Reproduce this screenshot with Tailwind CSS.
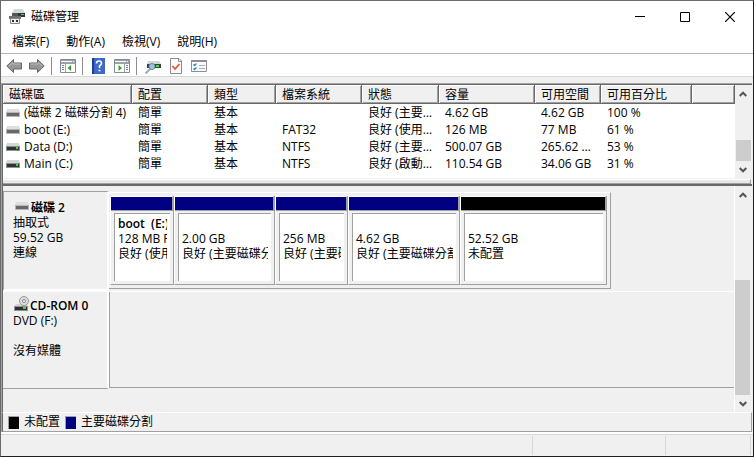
<!DOCTYPE html>
<html lang="zh-Hant">
<head>
<meta charset="utf-8">
<meta name="viewport" content="width=device-width, initial-scale=1">
<title>磁碟管理</title>
<script src="https://cdn.jsdelivr.net/npm/@tailwindcss/browser@4"></script>
</head>
<body class="h-screen overflow-hidden bg-[#f0f0f0] font-['Open_Sans','Noto_Sans_CJK_TC',sans-serif] text-xs text-black">
<svg class="hidden" aria-hidden="true">
  <symbol id="drive" viewBox="0 0 14 8"><path d="M1 0h12l1 3H0z" fill="#dcdee1"/><path d="M0 3h14v5H0z" fill="#b4b6b9"/><path d="M1 4h12v3H1z" fill="#66686a"/></symbol>
  <symbol id="drive-on" viewBox="0 0 14 8"><path d="M1 0h12l1 3H0z" fill="#d3d5d8"/><path d="M0 3h14v5H0z" fill="#8f9193"/><path d="M1 4h12v3H1z" fill="#303234"/><path d="M10 4h2v2h-2z" fill="#2fe02f"/></symbol>
  <symbol id="up" viewBox="0 0 8 6"><path d="M0.700 5 4 1.700 7.300 5" fill="none" stroke="#555" stroke-width="2"/></symbol>
  <symbol id="down" viewBox="0 0 8 6"><path d="M0.700 1 4 4.300 7.300 1" fill="none" stroke="#555" stroke-width="2"/></symbol>
</svg>
<div class="flex h-full flex-col border border-[#6b6b6b] border-r-[#202020] border-b-[#202020]">
  <header class="flex h-[31px] shrink-0 items-center bg-white pl-2">
    <svg class="h-4 w-4" viewBox="0 0 16 16" aria-hidden="true"><path d="M5 0h9l2 4H3z" fill="#d4d6d8"/><path d="M3 4h13v4H3z" fill="#55575a"/><path d="M9 4h7v4H9z" fill="#343638"/><path d="M12 5h3v1h-3z" fill="#35d83b"/><path d="M0 7h12v3H0z" fill="#6e7072"/><path d="M1.500 9.500h9v5h-9z" fill="#ececec" stroke="#888"/><path d="M3 11h2v2H3zM7 11h2v2H7z" fill="#333"/></svg>
    <h1 class="grow pl-[6px]">磁碟管理</h1>
    <button aria-label="最小化" class="flex h-full w-[45px] items-center justify-center"><svg class="h-[10px] w-[10px]"><path d="M0 4.500h10" stroke="#000"/></svg></button>
    <button aria-label="最大化" class="flex h-full w-[45px] items-center justify-center"><svg class="h-[10px] w-[10px]"><path d="M.5.5h9v9h-9z" fill="none" stroke="#000"/></svg></button>
    <button aria-label="關閉" class="flex h-full w-[46px] items-center justify-center"><svg class="h-[10px] w-[10px]"><path d="m0 0 10 10M10 0 0 10" stroke="#000" stroke-width="1.200"/></svg></button>
  </header>
  <nav class="flex h-[22px] shrink-0 items-center gap-[17px] border-b border-[#b0b4bf] bg-white pb-px pl-[11px]">
    <button>檔案(F)</button><button>動作(A)</button><button>檢視(V)</button><button>說明(H)</button>
  </nav>
  <div class="flex h-[23px] shrink-0 items-center border-b border-[#d7d7d7] bg-white pt-[2px] pl-1">
    <button aria-label="上一頁" class="px-[1px]"><svg class="h-4 w-4" viewBox="0 0 16 16"><path d="M.8 8 7.500 1.500V5H15.500v6H7.500v3.500z" fill="#969696" stroke="#666"/><path d="M3 8 7 4.500V6h7.500" fill="none" stroke="#b9b9b9"/></svg></button>
    <button aria-label="下一頁" class="ml-[5px] px-[1px]"><svg class="h-4 w-4" viewBox="0 0 16 16"><path d="M15.200 8 8.500 1.500V5H.5v6h8v3.500z" fill="#969696" stroke="#666"/><path d="M13 8 9 4.500V6H1.500" fill="none" stroke="#b9b9b9"/></svg></button>
    <span class="mr-[6px] ml-[5px] h-[18px] w-px bg-[#8d8d8d]"></span>
    <button aria-label="顯示主控台樹狀目錄" class="px-[2px]"><svg class="h-[14px] w-4" viewBox="0 0 16 14"><path d="M.5.5h15v13H.5z" fill="#fff" stroke="#838b98"/><path d="M1 1h14v3H1z" fill="#9aa2ae"/><path d="M1 2.500h11M13 2.500h1" stroke="#fff"/><path d="M5.500 5v8M1 4.500h14" stroke="#9ba1aa"/><path d="M2 6.500h2M2 8.500h2M2 10.500h2" stroke="#687b99"/><path d="M11 6v6L7.500 9z" fill="#32a12e"/></svg></button>
    <span class="mr-[6px] ml-1 h-[18px] w-px bg-[#8d8d8d]"></span>
    <button aria-label="說明" class="px-[3px]"><svg class="h-4 w-[13px]" viewBox="0 0 13 16"><path d="M0 0h13v16H0z" fill="#3f68cc"/><path d="M0 0h2v16H0z" fill="#233e91"/><path d="M4.500 5.500Q4.500 3 7 3t2.500 2.200Q9.500 6.500 7.500 8V10M6.500 12.500h2" fill="none" stroke="#fff" stroke-width="1.600"/></svg></button>
    <button aria-label="顯示動作窗格" class="ml-[3px] px-[3px]"><svg class="h-[14px] w-4" viewBox="0 0 16 14"><path d="M.5.5h15v13H.5z" fill="#fff" stroke="#838b98"/><path d="M1 1h14v3H1z" fill="#9aa2ae"/><path d="M1 2.500h11M13 2.500h1" stroke="#fff"/><path d="M10.500 5v8M1 4.500h14" stroke="#9ba1aa"/><path d="M12 6.500h2M12 8.500h2M12 10.500h2" stroke="#687b99"/><path d="M4.500 6v6L8 9z" fill="#32a12e"/></svg></button>
    <span class="mx-[3px] h-[18px] w-px bg-[#8d8d8d]"></span>
    <button aria-label="重新掃描磁碟" class="ml-[5px]"><svg class="h-4 w-4" viewBox="0 0 16 16"><path d="M3 3h11l2 3H2z" fill="#d5d7d9"/><path d="M2 6h14v4H2z" fill="#3b3d3f"/><path d="M11 7h3v2h-3z" fill="#3bdc42"/><path d="m.5 15.500 5-5" stroke="#9aafc0" stroke-width="2"/><circle cx="7" cy="8.500" r="3" fill="#a5c3d6" stroke="#6587a0"/></svg></button>
    <button aria-label="內容" class="ml-[9px]"><svg class="h-4 w-3" viewBox="0 0 12 16"><path d="M.5.5H9L11.500 3v12.500H.5z" fill="#fafafa" stroke="#8c8c8c"/><path d="M8.500 .5V3.500h3" fill="none" stroke="#8c8c8c"/><path d="m2.500 8 2.500 3L9.500 6" fill="none" stroke="#e4562d" stroke-width="1.800"/></svg></button>
    <button aria-label="選項" class="ml-[9px]"><svg class="h-3 w-4" viewBox="0 0 16 12"><path d="M.5.5h15v11H.5z" fill="#fcfdff" stroke="#8b9099"/><path d="M0 1h16" stroke="#8b9099" stroke-width="2"/><path d="m2.500 4.500 1 1 2-2M2.500 8.500l1 1 2-2" fill="none" stroke="#308ad0" stroke-width="1.400"/><path d="M8 5.500h6M8 8.500h6" stroke="#aaa"/></svg></button>
  </div>
  <main class="mt-[6px] mr-px flex min-h-0 grow flex-col border-t border-l border-[#a0a0a0]">
    <section class="flex h-[94px] shrink-0 border-t border-l border-[#696969] bg-white" aria-label="磁碟區清單">
      <div class="min-w-0 grow overflow-hidden">
      <table class="w-full table-fixed border-separate border-spacing-0 text-left">
        <colgroup><col class="w-[129px]"><col class="w-[76px]"><col class="w-[68px]"><col class="w-[86px]"><col class="w-[77px]"><col class="w-[96px]"><col class="w-[66px]"><col class="w-[91px]"><col></colgroup>
        <thead><tr class="h-[19px] leading-4 [&>th]:border-r [&>th]:border-b [&>th]:border-[#696969] [&>th]:bg-[#f0f0f0] [&>th]:p-0 [&>th]:pt-[2px] [&>th]:pl-[6px] [&>th]:font-normal [&>th]:whitespace-nowrap [&>th]:shadow-[inset_1px_1px_white,inset_-1px_-1px_#a0a0a0]">
          <th>磁碟區</th><th>配置</th><th>類型</th><th>檔案系統</th><th>狀態</th><th>容量</th><th>可用空間</th><th>可用百分比</th><th aria-label="其他"></th></tr></thead>
        <tbody class="[&_td]:h-[17px] [&_td]:overflow-hidden [&_td]:p-0 [&_td]:pt-px [&_td]:pr-[5px] [&_td]:pl-[6px] [&_td]:leading-4 [&_td]:text-ellipsis [&_td]:whitespace-nowrap">
          <tr><td><div class="-ml-[3px] flex items-center gap-1"><svg class="h-2 w-[14px] shrink-0"><use href="#drive"/></svg>(磁碟 2 磁碟分割 4)</div></td><td>簡單</td><td>基本</td><td></td><td>良好 (主要磁碟分割)</td><td>4.62 GB</td><td>4.62 GB</td><td>100 %</td><td></td></tr>
          <tr><td><div class="-ml-[3px] flex items-center gap-1"><svg class="h-2 w-[14px] shrink-0"><use href="#drive"/></svg>boot (E:)</div></td><td>簡單</td><td>基本</td><td>FAT32</td><td>良好 (使用中)</td><td>126 MB</td><td>77 MB</td><td>61 %</td><td></td></tr>
          <tr><td><div class="-ml-[3px] flex items-center gap-1"><svg class="h-2 w-[14px] shrink-0"><use href="#drive-on"/></svg>Data (D:)</div></td><td>簡單</td><td>基本</td><td>NTFS</td><td>良好 (主要磁碟分割)</td><td>500.07 GB</td><td>265.62 GB</td><td>53 %</td><td></td></tr>
          <tr><td><div class="-ml-[3px] flex items-center gap-1"><svg class="h-2 w-[14px] shrink-0"><use href="#drive-on"/></svg>Main (C:)</div></td><td>簡單</td><td>基本</td><td>NTFS</td><td>良好 (啟動磁碟)</td><td>110.54 GB</td><td>34.06 GB</td><td>31 %</td><td></td></tr>
        </tbody>
      </table>
      </div>
      <div class="flex w-[17px] shrink-0 flex-col items-center bg-[#f0f0f0] pr-px">
        <svg class="mt-[6px] h-[6px] w-2"><use href="#up"/></svg><div class="mt-[43px] h-[21px] w-[15px] bg-[#cdcdcd]"></div><svg class="mt-[6px] h-[6px] w-2"><use href="#down"/></svg>
      </div>
    </section>
    <div class="h-2 shrink-0 border-b-2 border-l border-[#696969] bg-[#f0f0f0] pt-px pr-px"><div class="h-[5px] border-t border-r border-b border-t-white border-r-[#a0a0a0] border-b-[#a0a0a0] bg-[#e8e8e8]"></div></div>
    <section class="flex min-h-0 grow border-l border-[#696969]" aria-label="磁碟配置圖">
      <div class="min-w-0 grow overflow-hidden pt-[5px]">
        <div class="flex h-[101px] border-b border-white">
          <div class="h-[100px] w-[106px] shrink-0 border-t border-r-2 border-b-2 border-l border-t-[#a0a0a0] border-r-white border-b-white border-l-[#a0a0a0] pt-2 pl-[9px] leading-[15px]">
            <h2 class="flex items-center gap-[2px] pl-[2px] font-semibold"><svg class="-mt-1 h-2 w-[14px]"><use href="#drive"/></svg>磁碟 2</h2><p>抽取式</p><p>59.52 GB</p><p>連線</p>
          </div>
          <div class="grow">
            <div class="mt-px flex h-[97px] w-[502px] border-t border-r border-b border-t-white border-r-[#a0a0a0] border-b-[#a0a0a0] pt-[3px] pl-px leading-[15px] whitespace-nowrap">
              <article class="flex h-[89px] w-[64px] flex-col border-r border-b border-l border-r-[#a0a0a0] border-b-[#a0a0a0] border-l-white">
                <div class="h-[15px] border-t border-r border-b border-t-white border-r-[#a0a0a0] border-b-[#a0a0a0] bg-[#000080]"></div>
                <div class="m-[3px] mt-[2px] grow border-t border-l border-[#a0a0a0] bg-white px-[3px] pt-[2px]"><div class="overflow-hidden"><h3 class="font-semibold">boot&nbsp; (E:)</h3><p>128 MB FAT32</p><p>良好 (使用中)</p></div></div>
              </article>
              <article class="flex h-[89px] w-[101px] flex-col border-r border-b border-l border-r-[#a0a0a0] border-b-[#a0a0a0] border-l-white">
                <div class="h-[15px] border-t border-r border-b border-t-white border-r-[#a0a0a0] border-b-[#a0a0a0] bg-[#000080]"></div>
                <div class="m-[3px] mt-[2px] grow border-t border-l border-[#a0a0a0] bg-white px-[3px] pt-[17px]"><div class="overflow-hidden"><p>2.00 GB</p><p>良好 (主要磁碟分割)</p></div></div>
              </article>
              <article class="flex h-[89px] w-[73px] flex-col border-r border-b border-l border-r-[#a0a0a0] border-b-[#a0a0a0] border-l-white">
                <div class="h-[15px] border-t border-r border-b border-t-white border-r-[#a0a0a0] border-b-[#a0a0a0] bg-[#000080]"></div>
                <div class="m-[3px] mt-[2px] grow border-t border-l border-[#a0a0a0] bg-white px-[3px] pt-[17px]"><div class="overflow-hidden"><p>256 MB</p><p>良好 (主要磁碟分割)</p></div></div>
              </article>
              <article class="flex h-[89px] w-[112px] flex-col border-r border-b border-l border-r-[#a0a0a0] border-b-[#a0a0a0] border-l-white">
                <div class="h-[15px] border-t border-r border-b border-t-white border-r-[#a0a0a0] border-b-[#a0a0a0] bg-[#000080]"></div>
                <div class="m-[3px] mt-[2px] grow border-t border-l border-[#a0a0a0] bg-white px-[3px] pt-[17px]"><div class="overflow-hidden"><p>4.62 GB</p><p>良好 (主要磁碟分割)</p></div></div>
              </article>
              <article class="flex h-[89px] w-[147px] flex-col border-r border-b border-l border-r-[#a0a0a0] border-b-[#a0a0a0] border-l-white">
                <div class="h-[15px] border-t border-r border-b border-t-white border-r-[#a0a0a0] border-b-[#a0a0a0] bg-black"></div>
                <div class="m-[3px] mt-[2px] grow border-t border-l border-[#a0a0a0] bg-white px-[3px] pt-[17px]"><div class="overflow-hidden"><p>52.52 GB</p><p>未配置</p></div></div>
              </article>
            </div>
          </div>
        </div>
        <div class="flex h-[97px]">
          <div class="w-[106px] shrink-0 border-r-2 border-b border-r-white border-b-[#a0a0a0] pt-[6px] pl-[10px] leading-[15px]">
            <h2 class="flex items-center gap-px pl-px font-semibold whitespace-nowrap"><svg class="-mt-1 h-[15px] w-[15px]" viewBox="0 0 15 15"><path d="M2 8h11l2 3H0z" fill="#d0d2d4"/><path d="M0 10h14v5H0z" fill="#8f9193"/><path d="M1 11h12v3H1z" fill="#2c2e30"/><path d="M9 11h3v2H9z" fill="#35dd3a"/><circle cx="10" cy="5" r="4.500" fill="#d9dbdd" stroke="#999"/><circle cx="10" cy="5" r="1.500" fill="#fff" stroke="#888"/></svg>CD-ROM 0</h2><p>DVD (F:)</p><p class="pt-[15px]">沒有媒體</p>
          </div>
          <div class="mb-px grow border-b border-l border-[#a0a0a0]"></div>
        </div>
      </div>
      <div class="flex w-[18px] shrink-0 flex-col items-center border-l border-white pr-[2px]">
        <svg class="mt-[6px] h-[6px] w-2 shrink-0"><use href="#up"/></svg><div class="mt-[82px] w-[15px] grow bg-[#cdcdcd]"></div><svg class="mt-[6px] mb-[5px] h-[6px] w-2 shrink-0"><use href="#down"/></svg>
      </div>
    </section>
    <section class="flex h-5 shrink-0 items-center border-t border-r border-b border-l border-t-white border-r-[#a0a0a0] border-b-[#a0a0a0] border-l-[#696969] pl-[5px]" aria-label="圖例">
      <i class="h-[13px] w-[11px] border-t border-l border-[#a0a0a0] bg-black"></i><span class="pl-[5px]">未配置</span>
      <i class="ml-[5px] h-[13px] w-[11px] border-t border-l border-[#a0a0a0] bg-[#000080]"></i><span class="pl-[5px]">主要磁碟分割</span>
    </section>
  </main>
  <footer class="flex h-6 shrink-0 border-t-2 border-white" aria-label="狀態列">
    <div class="flex grow border-t border-[#d7d7d7] py-px pr-[2px]"><div class="grow border-r border-[#d7d7d7]"></div><div class="w-[133px] border-r border-[#d7d7d7]"></div><div class="w-[85px] border-r border-[#d7d7d7]"></div></div>
  </footer>
</div>
</body>
</html>
